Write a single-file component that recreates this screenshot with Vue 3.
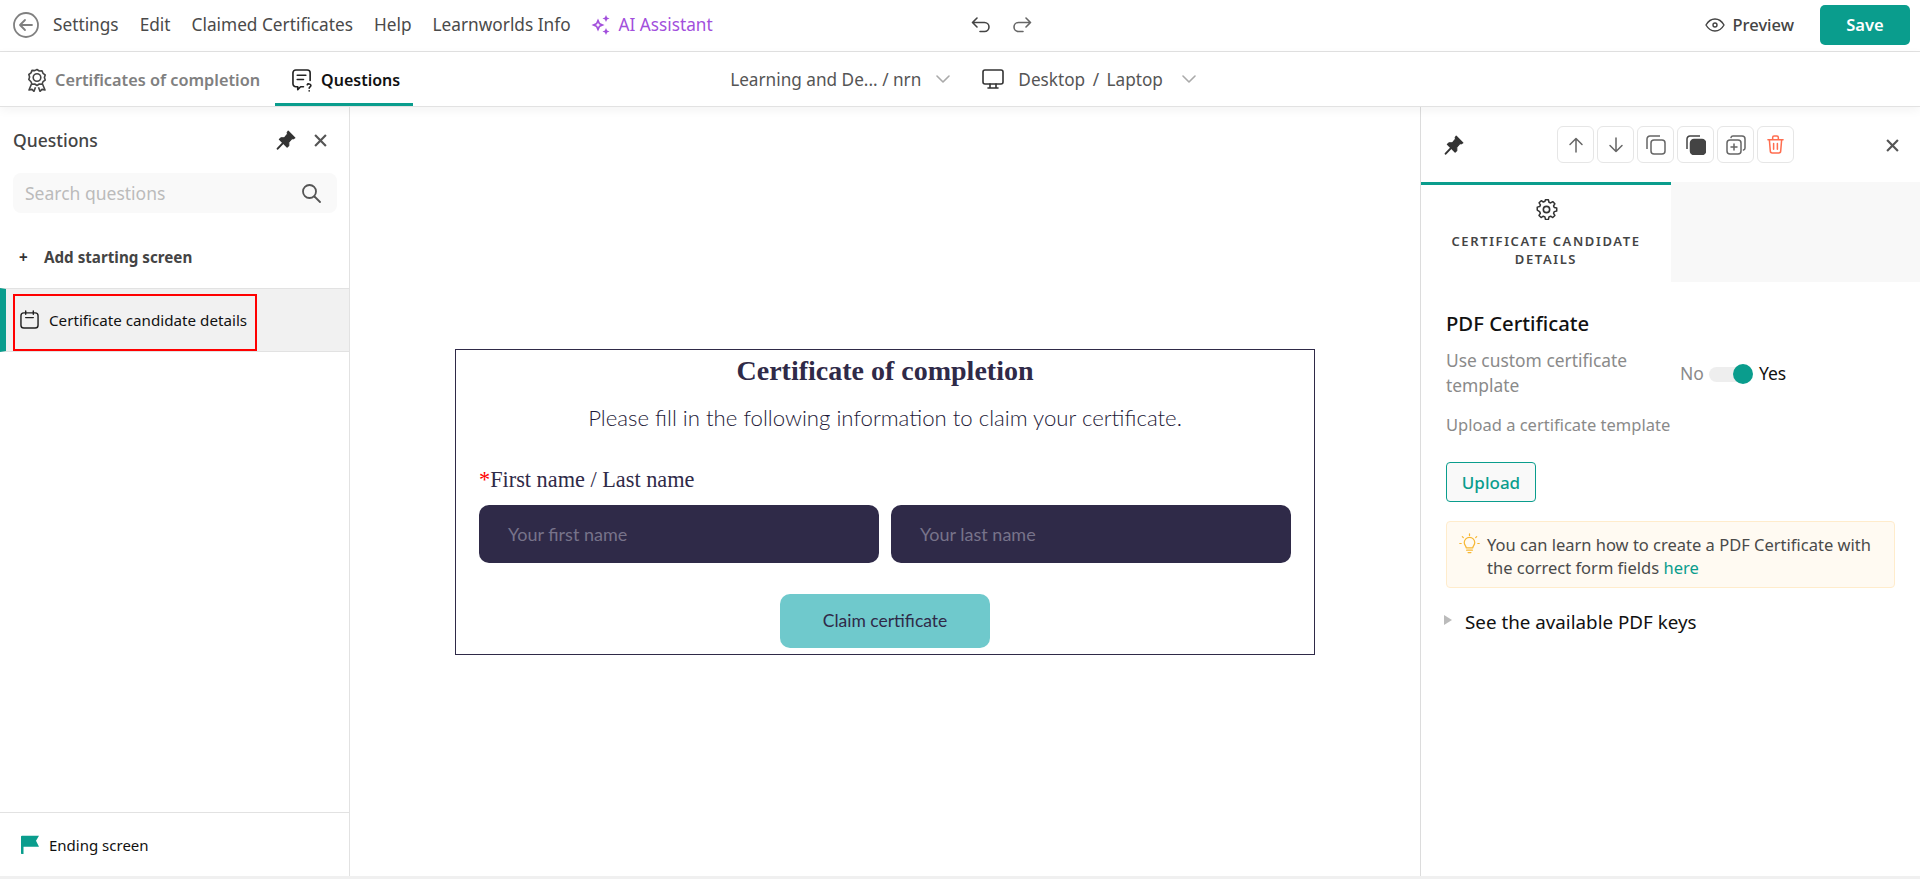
<script setup>
const nav = ['Settings', 'Edit', 'Claimed Certificates', 'Help', 'Learnworlds Info']
</script>

<template>
  <div class="page">
    <header class="topbar">
      <svg class="back" viewBox="0 0 26 26" width="26" height="26" fill="none" stroke="#808080" stroke-width="1.800" stroke-linecap="round" stroke-linejoin="round"><circle cx="13" cy="13" r="12"/><path d="M19 13H7.500M12 8l-5 5 5 5"/></svg>
      <nav class="nav">
        <span v-for="n in nav" :key="n">{{ n }}</span>
      </nav>
      <div class="ai">
        <svg viewBox="0 0 22 22" width="22" height="22" fill="#a24fdc"><path d="M8 4.500l2 4.500 4.500 2-4.500 2-2 4.500-2-4.500-4.500-2 4.500-2zM8 8.500L7.200 10.200 5.500 11l1.700.8.8 1.700.8-1.700 1.700-.8-1.700-.8z" fill-rule="evenodd"/><path d="M16 1l1.100 2.400L19.500 4.500l-2.400 1.100L16 8l-1.100-2.400L12.500 4.500l2.400-1.100zM16 14l1.100 2.400 2.400 1.100-2.400 1.100L16 21l-1.100-2.400-2.400-1.100 2.400-1.100z"/></svg>
        <span>AI Assistant</span>
      </div>
      <div class="undo">
        <svg viewBox="0 0 20 16" width="20" height="16" fill="none" stroke="#444" stroke-width="1.600" stroke-linecap="round" stroke-linejoin="round"><path d="M6 1L1.500 5.500 6 10M2 5.500h11.500a4.500 4.500 0 0 1 0 9H9"/></svg>
        <svg viewBox="0 0 20 16" width="20" height="16" fill="none" stroke="#666" stroke-width="1.600" stroke-linecap="round" stroke-linejoin="round"><path d="M14 1l4.500 4.500L14 10M18 5.500H6.500a4.500 4.500 0 0 0 0 9H11"/></svg>
      </div>
      <div class="preview">
        <svg viewBox="0 0 20 14" width="20" height="14" fill="none" stroke="#444" stroke-width="1.400"><path d="M1 7c2.200-3.800 5.200-6 9-6s6.800 2.200 9 6c-2.200 3.800-5.200 6-9 6s-6.800-2.200-9-6z"/><circle cx="10" cy="7" r="2"/></svg>
        <span>Preview</span>
      </div>
      <button class="save">Save</button>
    </header>

    <div class="subbar">
      <div class="tab muted">
        <svg viewBox="0 0 20 24" width="20" height="24" fill="none" stroke="#444" stroke-width="1.600" stroke-linejoin="round"><path d="M10 1l2.300 1.500 2.700-.2 1 2.500 2.200 1.600-.8 2.600.8 2.600-2.200 1.600-1 2.500-2.700-.2-2.300 1.500-2.300-1.500-2.700.2-1-2.500L1.800 11l.8-2.600L1.800 6 4 4.400l1-2.500 2.700.2z" transform="translate(0 .5)"/><circle cx="10" cy="9.500" r="3.800"/><path d="M4.500 16L2 22l3-.6L7 23.300l1.500-4M15.500 16l2.500 6-3-.6-2 1.900-1.500-4"/></svg>
        <span>Certificates of completion</span>
      </div>
      <div class="tab active">
        <svg viewBox="0 0 22 24" width="21" height="23" fill="none" stroke="#222" stroke-width="1.700" stroke-linecap="round" stroke-linejoin="round"><path d="M12 18.500H9l-3 3v-3H4a3 3 0 0 1-3-3V4a3 3 0 0 1 3-3h12a3 3 0 0 1 3 3v8"/><path d="M5.500 6.500h9M5.500 11h6.500"/><path d="M16 16.500c.3-1.300 3.800-1.300 3.800.7 0 1.400-1.800 1.400-1.800 2.800M18 22.800v.2"/></svg>
        <span>Questions</span>
      </div>
      <div class="dropdown course">
        <span>Learning and De... / nrn</span>
        <svg class="chev" viewBox="0 0 14 8" width="14" height="8" fill="none" stroke="#aaa" stroke-width="1.600" stroke-linecap="round" stroke-linejoin="round"><path d="M1 1l6 6 6-6"/></svg>
      </div>
      <div class="dropdown device">
        <svg viewBox="0 0 22 20" width="22" height="20" fill="none" stroke="#333" stroke-width="1.600" stroke-linejoin="round" stroke-linecap="round"><rect x="1" y="1" width="20" height="14" rx="2"/><path d="M8 15v4M14 15v4M6 19h10"/></svg>
        <span class="device-name">Desktop / Laptop</span>
        <svg class="chev" viewBox="0 0 14 8" width="14" height="8" fill="none" stroke="#aaa" stroke-width="1.600" stroke-linecap="round" stroke-linejoin="round"><path d="M1 1l6 6 6-6"/></svg>
      </div>
    </div>

    <main class="main">
      <aside class="left">
        <div class="left-head">
          <h2>Questions</h2>
          <svg class="pin" viewBox="0 0 18 18" width="20" height="20" fill="#333" stroke="#333" stroke-linejoin="round"><path d="M11 1l6 6-1.500 1-1-.5-3 3.500v3L10 15.500l-7-7L4.500 7h3l3-3.500-.5-1z"/><path d="M6 12l-4.500 4.800" fill="none" stroke-width="1.800" stroke-linecap="round"/></svg>
          <svg class="close" viewBox="0 0 12 12" width="13" height="13" fill="none" stroke="#555" stroke-width="2"><path d="M1 1l10 10M11 1L1 11"/></svg>
        </div>
        <div class="search">
          <span>Search questions</span>
          <svg viewBox="0 0 20 20" width="20" height="20" fill="none" stroke="#555" stroke-width="1.800" stroke-linecap="round"><circle cx="8.500" cy="8.500" r="6.500"/><path d="M13.500 13.500L19 19"/></svg>
        </div>
        <div class="add"><span class="plus">+</span><span>Add starting screen</span></div>
        <div class="row">
          <div class="row-mark">
            <svg viewBox="0 0 20 20" width="19" height="19" fill="none" stroke="#222" stroke-width="1.500" stroke-linecap="round" stroke-linejoin="round"><rect x="1" y="3" width="18" height="16" rx="3"/><path d="M6 1v3.500M14 1v3.500M6 8h8"/></svg>
            <span>Certificate candidate details</span>
          </div>
        </div>
        <div class="spacer"></div>
        <div class="ending">
          <svg viewBox="0 0 20 20" width="20" height="20" fill="#0a9d8d"><path d="M1 1.500C1 1 1.400.8 2 .8h17l-3 5 3 6H3.500V19H1.500C1.200 19 1 18.700 1 18.300z"/></svg>
          <span>Ending screen</span>
        </div>
      </aside>

      <section class="canvas">
        <div class="cert">
          <h1>Certificate of completion</h1>
          <p class="sub">Please fill in the following information to claim your certificate.</p>
          <div class="label"><span class="req">*</span>First name / Last name</div>
          <div class="inputs">
            <div class="input">Your first name</div>
            <div class="input">Your last name</div>
          </div>
          <div class="claim">Claim certificate</div>
        </div>
      </section>

      <aside class="right">
        <div class="tools">
          <svg class="pin" viewBox="0 0 18 18" width="20" height="20" fill="#333" stroke="#333" stroke-linejoin="round"><path d="M11 1l6 6-1.500 1-1-.5-3 3.500v3L10 15.500l-7-7L4.500 7h3l3-3.500-.5-1z"/><path d="M6 12l-4.500 4.800" fill="none" stroke-width="1.800" stroke-linecap="round"/></svg>
          <div class="tool-group">
            <div class="tool"><svg viewBox="0 0 16 16" width="16" height="16" fill="none" stroke="#666" stroke-width="1.500" stroke-linecap="round" stroke-linejoin="round"><path d="M8 15V1.500M2 7.500l6-6 6 6"/></svg></div>
            <div class="tool"><svg viewBox="0 0 16 16" width="16" height="16" fill="none" stroke="#666" stroke-width="1.500" stroke-linecap="round" stroke-linejoin="round"><path d="M8 1v13.500M2 8.500l6 6 6-6"/></svg></div>
            <div class="tool"><svg viewBox="0 0 20 20" width="20" height="20" fill="none" stroke="#666" stroke-width="1.500"><rect x="5" y="5" width="14" height="14" rx="3"/><path d="M1 14V4a3 3 0 0 1 3-3h10"/></svg></div>
            <div class="tool"><svg viewBox="0 0 20 20" width="20" height="20" fill="none" stroke="#444" stroke-width="1.500"><rect x="4.500" y="4.500" width="15" height="15" rx="3.500" fill="#444"/><path d="M1 14V4a3 3 0 0 1 3-3h10"/></svg></div>
            <div class="tool"><svg viewBox="0 0 20 20" width="20" height="20" fill="none" stroke="#666" stroke-width="1.500" stroke-linecap="round"><rect x="1" y="5" width="14" height="14" rx="3"/><path d="M5 2.500A2 2 0 0 1 7 1h9a3 3 0 0 1 3 3v9a2 2 0 0 1-1.500 2M8 9v6M5 12h6"/></svg></div>
            <div class="tool"><svg viewBox="0 0 18 20" width="17" height="19" fill="none" stroke="#ff6e50" stroke-width="1.600" stroke-linecap="round" stroke-linejoin="round"><path d="M1 5h16M6 5V2.500A1.500 1.500 0 0 1 7.500 1h3A1.500 1.500 0 0 1 12 2.500V5M2.500 5l1 12a2 2 0 0 0 2 2h7a2 2 0 0 0 2-2l1-12M7 9v6M11 9v6"/></svg></div>
          </div>
          <svg class="close" viewBox="0 0 12 12" width="13" height="13" fill="none" stroke="#555" stroke-width="2"><path d="M1 1l10 10M11 1L1 11"/></svg>
        </div>
        <div class="rtabs">
          <div class="rtab">
            <svg viewBox="0 0 24 24" width="23" height="23" fill="none" stroke="#333" stroke-width="1.700" stroke-linejoin="round"><circle cx="12" cy="12" r="3.300"/><path d="M10.300 2h3.400l.6 2.800 1.900.8 2.400-1.500 2.400 2.400-1.500 2.400.8 1.900 2.800.6v3.400l-2.800.6-.8 1.900 1.500 2.400-2.400 2.400-2.400-1.500-1.900.8-.6 2.800h-3.400l-.6-2.800-1.900-.8-2.400 1.500-2.400-2.400 1.500-2.400-.8-1.900L1 13.700v-3.400l2.800-.6.800-1.900L3.100 5.400l2.400-2.400 2.400 1.500 1.900-.8z" transform="translate(12 12) scale(.92) translate(-11.500 -13)"/></svg>
            <div class="rtab-text">CERTIFICATE CANDIDATE DETAILS</div>
          </div>
          <div class="rtab-empty"></div>
        </div>
        <div class="props">
          <h3>PDF Certificate</h3>
          <div class="toggle-row">
            <div class="field-label custom-label">Use custom certificate template</div>
            <div class="toggle">
              <span class="no">No</span>
              <span class="track"><i class="thumb"></i></span>
              <span class="yes">Yes</span>
            </div>
          </div>
          <div class="field-label upload-label">Upload a certificate template</div>
          <button class="upload">Upload</button>
          <div class="note">
            <svg viewBox="0 0 22 22" width="21" height="21" fill="none" stroke="#f7b733" stroke-width="1.300" stroke-linecap="round" stroke-linejoin="round"><path d="M11 1v1.500M3.500 3.800l1 1M18.500 3.800l-1 1M.8 11h1.500M19.700 11h1.500"/><path d="M7.500 15.500c0-2-2-2.800-2-5.500a5.500 5.500 0 0 1 11 0c0 2.700-2 3.500-2 5.500zM8 18h6M9.500 20.500h3"/></svg>
            <p>You can learn how to create a PDF Certificate with the correct form fields <a>here</a></p>
          </div>
          <div class="keys"><i class="tri"></i><span>See the available PDF keys</span></div>
        </div>
      </aside>
    </main>
  </div>
</template>

<style>
html, body { margin: 0; background: #fff; }
</style>

<style scoped>
.page { height: 876px; border-bottom: 3px solid #f0f0f0; display: flex; flex-direction: column; font-family: "Noto Sans", sans-serif; color: #444; overflow: hidden; }
.topbar { height: 49px; padding-bottom: 2px; flex: none; border-bottom: 1px solid #e2e2e2; display: flex; align-items: center; box-sizing: content-box; }
.back { margin-left: 13px; flex: none; }
.nav { display: flex; gap: 21px; margin-left: 14px; font-size: 17.250px; color: #4a4a4a; }
.ai { display: flex; align-items: center; gap: 7px; margin-left: 19px; color: #a24fdc; font-size: 17.200px; }
.undo { display: flex; gap: 21px; margin-left: 258px; }
.preview { display: flex; align-items: center; gap: 8px; margin-left: auto; font-size: 16.500px; font-weight: 500; }
.save { margin: 0 10px 0 26px; width: 90px; height: 40px; border: 0; border-radius: 5px; background: #0a9d8d; color: #fff; font: 600 16.500px "Noto Sans", sans-serif; }
.subbar { height: 54px; flex: none; border-bottom: 1px solid #e2e2e2; display: flex; align-items: center; box-shadow: 0 3px 10px rgba(0,0,0,.05); position: relative; z-index: 1; background: #fff; }
.tab { display: flex; align-items: center; gap: 8px; font-size: 16.300px; font-weight: 600; height: 54px; box-sizing: border-box; }
.tab.muted { margin-left: 27px; padding-top: 2px; color: #808080; }
.tab.active { margin-left: 15px; padding: 5px 13px 0 17px; color: #111; border-bottom: 3px solid #0a9d8d; font-size: 16px; }
.dropdown { display: flex; align-items: center; font-size: 17.200px; color: #555; }
.course { margin-left: 317px; gap: 15px; }
.device { margin-left: 32px; gap: 14px; }
.device-name { word-spacing: 3px; }
.device .chev { margin-left: 5px; }
.main { flex: 1; display: flex; min-height: 0; }
.left { width: 349px; flex: none; border-right: 1px solid #e2e2e2; display: flex; flex-direction: column; }
.left-head { height: 66px; display: flex; align-items: center; padding: 0 22px 0 13px; box-sizing: border-box; }
.left-head h2 { margin: 0 auto 0 0; font-size: 17.500px; font-weight: 500; color: #444; }
.left-head .close { margin-left: 18px; }
.search { margin: 0 12px 0 13px; height: 40px; background: #f9f9f9; border-radius: 8px; display: flex; align-items: center; justify-content: space-between; padding: 0 16px 0 12px; font-size: 17.500px; color: #bbb; }
.add { margin-top: 25px; height: 37px; display: flex; align-items: center; font-size: 15.200px; font-weight: 700; color: #444; padding-left: 19px; }
.plus { width: 25px; color: #333; }
.row { margin-top: 13px; height: 62px; background: #f1f1f1; border-top: 1px solid #e2e2e2; border-bottom: 1px solid #e2e2e2; box-sizing: content-box; border-left: 6px solid #0a9d8d; position: relative; }
.row-mark { margin: 5px 0 0 7px; width: 244px; height: 57px; box-sizing: border-box; border: 2px solid #f00; display: flex; align-items: center; gap: 10px; padding: 0 0 6px 5px; font-size: 15.200px; color: #111; }
.spacer { flex: 1; }
.ending { height: 63px; border-top: 1px solid #e2e2e2; display: flex; align-items: center; gap: 9px; padding-left: 20px; font-size: 15px; color: #111; }
.canvas { flex: 1; min-width: 0; display: flex; flex-direction: column; padding: 242px 0 0 105px; box-sizing: border-box; }
.cert { width: 860px; height: 306px; box-sizing: border-box; border: 1px solid #2f2a48; color: #2f2a48; padding: 0 23px; display: flex; flex-direction: column; }
.cert h1 { margin: 0; font: 700 28px/42px "Liberation Serif", serif; text-align: center; height: 42px; }
.sub { margin: 9px 0 0; font: 300 22.200px/34px "Lato", sans-serif; text-align: center; color: #1e1a38; }
.label { margin-top: 31px; font: 400 22.300px/28px "Liberation Serif", serif; }
.req { color: #f00; }
.inputs { display: flex; gap: 12px; margin-top: 11px; }
.input { flex: 1; height: 58px; border-radius: 10px; background: #2f2a48; color: #77738a; font: 400 18px/58px "Lato", sans-serif; padding-left: 29px; box-sizing: border-box; }
.claim { align-self: center; margin-top: 31px; width: 210px; height: 54px; border-radius: 10px; background: #6fc9cc; font: 400 17.500px/54px "Lato", sans-serif; text-align: center; color: #2f2a48; }
.right { width: 499px; flex: none; border-left: 1px solid #dcdcdc; box-sizing: content-box; display: flex; flex-direction: column; }
.tools { height: 75px; flex: none; display: flex; align-items: center; padding-left: 23px; position: relative; }
.tool-group { display: flex; gap: 3px; margin-left: 93px; }
.tool { width: 37px; height: 37px; box-sizing: border-box; border: 1px solid #e6e6e6; border-radius: 6px; display: flex; align-items: center; justify-content: center; }
.tools .close { margin-left: 92px; margin-top: 1px; }
.rtabs { display: flex; height: 100px; flex: none; }
.rtab { width: 250px; border-top: 3px solid #0a9d8d; box-sizing: border-box; text-align: center; padding-top: 13px; }
.rtab svg { display: block; margin: 0 auto 11px; }
.rtab-text { font-size: 13px; line-height: 18px; font-weight: 600; letter-spacing: 1.600px; color: #444; padding: 0 10px; }
.rtab-empty { flex: 1; background: #f8f8f8; }
.props { padding: 27px 25px 0 25px; }
.props h3 { margin: 0; font-size: 20.300px; line-height: 28px; font-weight: 500; color: #111; }
.toggle-row { display: flex; margin-top: 11px; align-items: center; }
.field-label { font-size: 16.500px; line-height: 25px; color: #8a8a8a; width: 234px; }
.custom-label { font-size: 17.400px; }
.toggle { display: flex; align-items: center; font-size: 17.500px; padding-top: 3px; }
.no { color: #8a8a8a; margin-top: -4px; }
.yes { color: #111; margin-left: 14px; margin-top: -4px; }
.track { width: 36px; height: 15px; margin-left: 5px; border-radius: 8px; background: #eee; position: relative; }
.thumb { position: absolute; right: -8px; top: -3px; width: 20px; height: 20px; border-radius: 50%; background: #0a9d8d; }
.upload-label { margin-top: 14px; width: auto; }
.upload { display: block; margin-top: 25px; width: 90px; height: 40px; border: 1px solid #0a9d8d; border-radius: 4px; background: #f9f9f9; color: #0a9d8d; font: 500 17px "Noto Sans", sans-serif; padding: 0; }
.note { margin-top: 19px; height: 67px; box-sizing: border-box; background: #fffaf2; border: 1px solid #ffeccc; border-radius: 4px; display: flex; gap: 7px; padding: 11px 12px; }
.note svg { flex: none; }
.note p { margin: 0; font-size: 16.500px; line-height: 23px; color: #4a4a4a; }
.note a { color: #0a9d8d; }
.keys { margin-top: 19px; display: flex; align-items: center; font-size: 18.800px; color: #111; margin-left: -2px; line-height: 30px; }
.tri { width: 0; height: 0; border-left: 8px solid #bbb; border-top: 5px solid transparent; border-bottom: 5px solid transparent; margin: -4px 13px 0 0; }
</style>
